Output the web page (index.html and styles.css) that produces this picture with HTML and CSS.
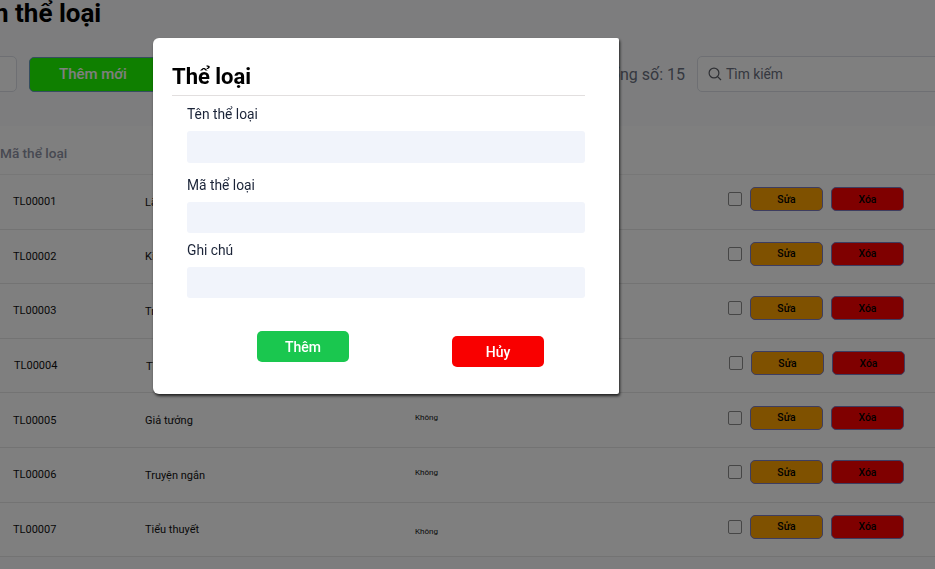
FILE: index.html
```html
<!DOCTYPE html>
<html lang="en">
  <head>
    <meta charset="UTF-8" />
    <meta name="viewport" content="width=device-width, initial-scale=1.0" />
    <title>Thể loại</title>
    <link rel="stylesheet" href="styles.css">
  </head>

  <body>
    <div class="page">
      <h1 class="page-title">Tên thể loại</h1>

      <div class="toolbar">
        <input class="filter" type="text" />
        <button class="btn-add">Thêm mới</button>
        <span class="total">Tổng số: 15</span>
        <div class="search">
          <svg width="14" height="14" viewBox="0 0 14 14" fill="none" stroke="#5d6068" stroke-width="1.2">
            <circle cx="6" cy="6" r="4.9" />
            <path d="M9.6 9.6L13 13" />
          </svg>
          <span>Tìm kiếm</span>
        </div>
      </div>

      <div class="table-head">Mã thể loại</div>

      <div class="row">
        <span class="col-id">TL00001</span>
        <span class="col-name">Lãng mạn</span>
        <span class="col-note">Không</span>
        <div class="actions">
          <span class="check"></span>
          <button class="btn-edit">Sửa</button>
          <button class="btn-del">Xóa</button>
        </div>
      </div>
      <div class="row">
        <span class="col-id">TL00002</span>
        <span class="col-name">Kinh dị</span>
        <span class="col-note">Không</span>
        <div class="actions">
          <span class="check"></span>
          <button class="btn-edit">Sửa</button>
          <button class="btn-del">Xóa</button>
        </div>
      </div>
      <div class="row">
        <span class="col-id">TL00003</span>
        <span class="col-name">Trinh thám</span>
        <span class="col-note">Không</span>
        <div class="actions">
          <span class="check"></span>
          <button class="btn-edit">Sửa</button>
          <button class="btn-del">Xóa</button>
        </div>
      </div>
      <div class="row row-shifted">
        <span class="col-id">TL00004</span>
        <span class="col-name">Tình cảm</span>
        <span class="col-note">Không</span>
        <div class="actions">
          <span class="check"></span>
          <button class="btn-edit">Sửa</button>
          <button class="btn-del">Xóa</button>
        </div>
      </div>
      <div class="row">
        <span class="col-id">TL00005</span>
        <span class="col-name">Giả tưởng</span>
        <span class="col-note">Không</span>
        <div class="actions">
          <span class="check"></span>
          <button class="btn-edit">Sửa</button>
          <button class="btn-del">Xóa</button>
        </div>
      </div>
      <div class="row">
        <span class="col-id">TL00006</span>
        <span class="col-name">Truyện ngắn</span>
        <span class="col-note">Không</span>
        <div class="actions">
          <span class="check"></span>
          <button class="btn-edit">Sửa</button>
          <button class="btn-del">Xóa</button>
        </div>
      </div>
      <div class="row row-low-note">
        <span class="col-id">TL00007</span>
        <span class="col-name">Tiểu thuyết</span>
        <span class="col-note">Không</span>
        <div class="actions">
          <span class="check"></span>
          <button class="btn-edit">Sửa</button>
          <button class="btn-del">Xóa</button>
        </div>
      </div>
    </div>

    <div class="overlay"></div>

    <div class="modal">
      <h2 class="modal-title">Thể loại</h2>
      <form class="modal-form">
        <label for="name">Tên thể loại</label>
        <input id="name" type="text" />
        <label for="code">Mã thể loại</label>
        <input id="code" type="text" />
        <label class="label-tight" for="note">Ghi chú</label>
        <input id="note" type="text" />
        <div class="modal-buttons">
          <button class="btn-save" type="button">Thêm</button>
          <button class="btn-cancel" type="button">Hủy</button>
        </div>
      </form>
    </div>
  </body>
</html>
```

FILE: styles.css
```css
html,
body {
  height: 100%;
  overflow: hidden;
}

body {
  margin: 0;
  font-family: Roboto, "Liberation Sans", sans-serif;
  background-color: #fafbfd;
}

button {
  font-family: inherit;
  cursor: pointer;
}

.page-title {
  margin: -2px 0 0 -35px;
  height: 58px;
  font-size: 26px;
  line-height: 30px;
  font-weight: 700;
  color: #000;
  white-space: nowrap;
}

.toolbar {
  display: flex;
  align-items: center;
  height: 36px;
}

.filter {
  width: 40px;
  height: 36px;
  margin-left: -23px;
  box-sizing: border-box;
  background-color: #fff;
  border: 1px solid #dcdfe6;
  border-radius: 5px;
}

.btn-add {
  width: 200px;
  height: 35px;
  margin-left: 12px;
  background-color: #1fff00;
  color: #fff;
  font-size: 15px;
  font-weight: 500;
  border: 1px solid #6a9ac0;
  border-radius: 5px;
  text-align: left;
  padding-left: 29px;
}

.total {
  margin-left: auto;
  margin-right: 1px;
  font-size: 16px;
  color: #6b7080;
}

.search {
  display: flex;
  align-items: center;
  gap: 4px;
  width: 260px;
  height: 36px;
  margin-left: 11px;
  margin-right: -22px;
  padding-left: 10px;
  box-sizing: border-box;
  font-size: 13.8px;
  color: #6b7080;
  background-color: #fff;
  border: 1px solid #dcdfe6;
  border-radius: 5px;
}

.table-head {
  height: 49px;
  margin-top: 34px;
  box-sizing: border-box;
  padding-top: 19px;
  font-size: 13.6px;
  line-height: 16px;
  font-weight: 500;
  color: #8f92a4;
  background-color: #fff;
  border-bottom: 1px solid #eee;
}

.row {
  display: flex;
  align-items: center;
  height: 54.6px;
  box-sizing: border-box;
  padding-left: 13px;
  background-color: #fff;
  border-bottom: 1.5px solid #e6e6e6;
  color: #111;
}

.col-id {
  width: 132px;
  font-size: 11px;
}

.col-name {
  width: 270px;
  margin-top: 1px;
  font-size: 11px;
}

.col-note {
  width: 313px;
  margin-bottom: 5px;
  font-size: 8px;
}

.actions {
  display: flex;
  align-items: center;
  margin-bottom: 5px;
}

.check {
  width: 14px;
  height: 14px;
  box-sizing: border-box;
  background-color: #fff;
  border: 1px solid #8d8d8d;
  border-radius: 2px;
}

.btn-edit,
.btn-del {
  width: 73px;
  height: 24px;
  padding: 0;
  font-size: 10.4px;
  font-weight: 500;
  color: #000;
  border: 1px solid #7a7ac0;
  border-radius: 5px;
}

.btn-edit {
  margin-left: 8px;
  background-color: #ffa200;
}

.btn-del {
  margin-left: 8px;
  background-color: #ff0000;
}

.row-shifted {
  padding-left: 14px;
}

.row-low-note .col-note {
  margin-top: 5px;
  margin-bottom: 0;
}

.overlay {
  position: fixed;
  inset: 0;
  background-color: rgba(0, 0, 0, 0.5);
}

.modal {
  position: fixed;
  left: 153px;
  top: 38px;
  width: 466px;
  height: 356px;
  box-sizing: border-box;
  padding: 25px 34px 0 19px;
  background-color: #fff;
  border-radius: 6px 2px 2px 6px;
  box-shadow: 1px 2px 3px rgba(0, 0, 0, 0.75);
}

.modal-title {
  margin: 0;
  height: 32px;
  font-size: 22px;
  line-height: 27px;
  font-weight: 700;
  color: #000;
  border-bottom: 1px solid #e2dfdf;
}

.modal-form {
  padding-left: 15px;
}

.modal-form label {
  display: block;
  margin-top: 10px;
  font-size: 13.8px;
  line-height: 17px;
  color: #1b2438;
}

.modal-form input {
  display: block;
  width: 100%;
  height: 31.5px;
  margin-top: 8px;
  box-sizing: border-box;
  border: none;
  border-radius: 3px;
  background-color: #f1f4fb;
}

.modal-form label:nth-of-type(2) {
  margin-top: 14px;
}

.modal-form .label-tight {
  margin-top: 8.5px;
}

.modal-buttons {
  display: flex;
  align-items: flex-start;
  margin-top: 33px;
  padding-left: 70px;
  gap: 103px;
}

.btn-save,
.btn-cancel {
  width: 92px;
  height: 31px;
  font-size: 14px;
  font-weight: 500;
  color: #fff;
  border: none;
  border-radius: 5px;
}

.btn-save {
  background-color: #1ac74f;
}

.btn-cancel {
  margin-top: 5px;
  background-color: #f90000;
}
```
